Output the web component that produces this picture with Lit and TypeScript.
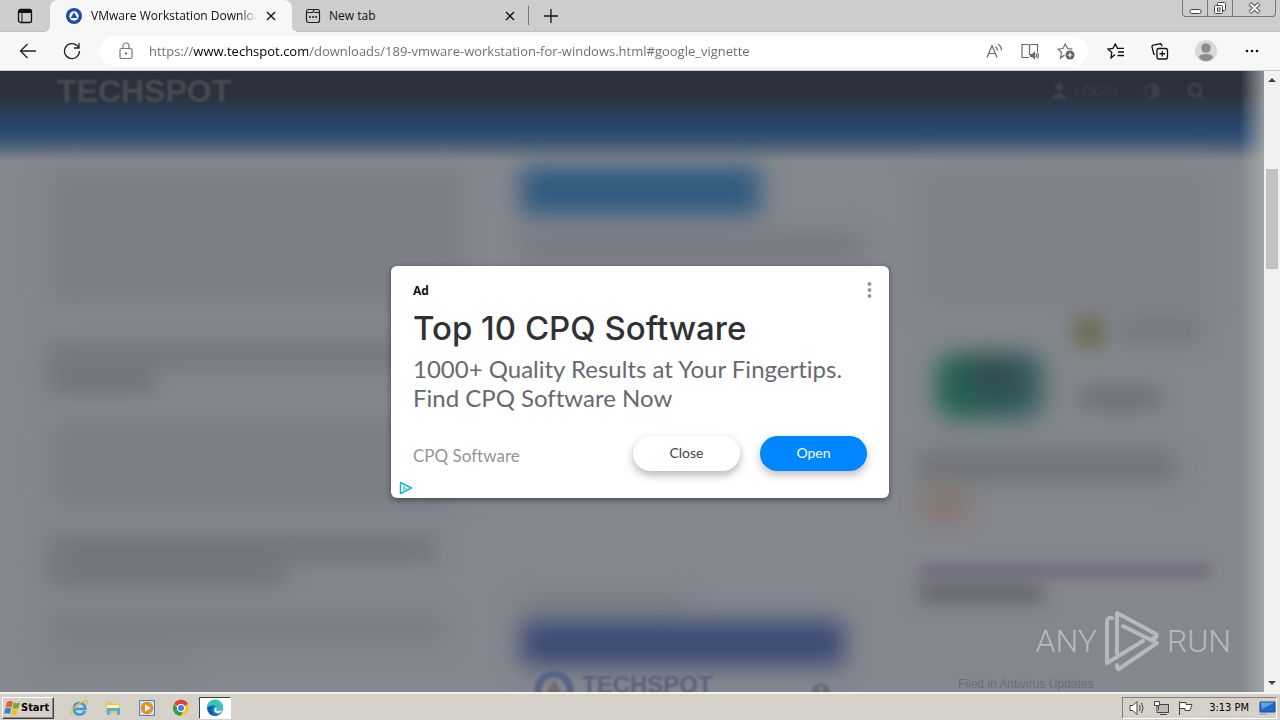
import { LitElement, html, css, svg } from "lit";
import { customElement } from "lit/decorators.js";
import { styleMap } from "lit/directives/style-map.js";

interface Block {
  gap: number;
  h: number;
  w: number;
  tone: string;
}

const leftColumn: Block[] = [
  { gap: 0, h: 140, w: 88, tone: "#7c7f85" },
  { gap: 38, h: 20, w: 84, tone: "#70737b" },
  { gap: 4, h: 20, w: 22, tone: "#696c74" },
  { gap: 30, h: 90, w: 86, tone: "#7c7f85" },
  { gap: 30, h: 20, w: 82, tone: "#6c6f77" },
  { gap: 4, h: 20, w: 50, tone: "#6c6f77" },
  { gap: 28, h: 34, w: 84, tone: "#7b7e85" },
  { gap: 4, h: 16, w: 30, tone: "#7b7e85" },
];

const middleColumn: Block[] = [
  { gap: 0, h: 48, w: 60, tone: "#2f5a80" },
  { gap: 20, h: 24, w: 86, tone: "#74777e" },
  { gap: 340, h: 10, w: 42, tone: "#74777c" },
  { gap: 12, h: 44, w: 81, tone: "#3b4a75" },
];

const logoMark = svg`<circle cx="12" cy="12" r="12" fill="#1b4f9f"/><circle cx="12" cy="12" r="7" fill="#fff"/><path d="M12 6.500 17 15H7Z" fill="#1b4f9f"/>`;

@customElement("faded-page")
class FadedPage extends LitElement {
  static styles = css`
    :host { display: block; background: #84878e; overflow: hidden; position: relative; }
    .band { height: 90px; background: linear-gradient(#2b2f3a 0, #2c313b 24px, #2a3b50 36px, #294163 48px, #2c4a70 60px, #3d5675 70px, #65717f 81px, #84878e 90px); }
    .columns { display: grid; grid-template-columns: 471fr 399fr 290fr; padding: 0 54px 0 50px; }
    .column { padding-top: 6px; }
    .block { filter: blur(12px); }
    .listing { height: 140px; background: #7e8188; filter: blur(14px); }
    .news { display: grid; grid-template-columns: 1fr 1fr; height: 118px; margin-top: 8px; column-gap: 14px; }
    .thumb { margin: 38px 14px 14px 16px; border-radius: 20px; background: radial-gradient(circle at 55% 30%, #2f4549, transparent 60%), linear-gradient(90deg, #1f6355, #3a6064); filter: blur(12px); }
    .source { display: flex; gap: 12px; height: 34px; }
    .dot { width: 34px; background: #6a6b51; border-radius: 50%; filter: blur(10px); }
    .name { flex: 1; margin: 0 10px 4px 0; background: #777a81; filter: blur(10px); }
    .caption { height: 22px; margin: 38px 50px 0 8px; background: #6c6f76; filter: blur(10px); }
    .story { height: 30px; margin-top: 18px; width: 88%; background: #6f7279; filter: blur(12px); }
    .badge { height: 36px; margin-top: 4px; width: 50px; background: linear-gradient(#827b6a, #8a6d66); filter: blur(12px); opacity: .8; }
    .rule { height: 16px; margin-top: 42px; background: #766f80; filter: blur(6px); }
    .topic { height: 20px; width: 42%; margin-top: 4px; background: #64666f; filter: blur(9px); }
    .edge { position: absolute; inset: 0 0 0 auto; width: 24px; background: linear-gradient(90deg, transparent, #a9adae); opacity: .8; }
    .sharp { position: absolute; inset: 0; display: flex; flex-direction: column; justify-content: space-between; }
    .top { display: flex; justify-content: space-between; padding: 3px 58px 0 57px; align-items: center; height: 34px; }
    .brand { font: 700 32px/32px "Liberation Sans", sans-serif; color: #474b54; filter: blur(1px); }
    .user { display: flex; align-items: center; gap: 24px; color: #3d414b; font: 14px/20px "Liberation Sans", sans-serif; filter: blur(1px); }
    .login { display: flex; align-items: center; gap: 6px; }
    .foot { display: grid; grid-template-columns: 471fr 399fr 290fr; padding: 0 54px 0 50px; height: 22px; }
    .stamp { grid-column: 2; display: flex; align-items: flex-start; gap: 8px; padding-left: 13px; font: 700 24px/30px "Liberation Sans", sans-serif; color: #59637a; filter: blur(1px); }
    .info { margin-left: 90px; margin-top: 12px; }
    .filed { padding: 4px 0 0 38px; font: 12px/20px "Liberation Sans", sans-serif; color: #6b6e76; white-space: nowrap; }
  `;

  private blocks(items: Block[]) {
    return items.map(
      (b) => html`<div class="block" style=${styleMap({ marginTop: `${b.gap}px`, height: `${b.h}px`, width: `${b.w}%`, background: b.tone })}></div>`
    );
  }

  render() {
    return html`
      <div class="band"></div>
      <div class="columns">
        <div class="column">${this.blocks(leftColumn)}</div>
        <div class="column">${this.blocks(middleColumn)}</div>
        <div class="column">
          <div class="listing"></div>
          <div class="news">
            <div class="thumb"></div>
            <div>
              <div class="source"><div class="dot"></div><div class="name"></div></div>
              <div class="caption"></div>
            </div>
          </div>
          <div class="story"></div>
          <div class="badge"></div>
          <div class="rule"></div>
          <div class="topic"></div>
        </div>
      </div>
      <div class="edge"></div>
      <div class="sharp">
        <div class="top">
          <div class="brand">TECHSPOT</div>
          <div class="user">
            <span class="login">
              <svg width="18" height="18" viewBox="0 0 18 18" fill="currentColor"><circle cx="9" cy="5" r="4"/><path d="M2 17c0-9 14-9 14 0Z"/></svg>
              LOGIN
            </span>
            <svg width="20" height="20" viewBox="0 0 20 20"><circle cx="10" cy="10" r="7" fill="none" stroke="currentColor" stroke-width="2"/><path d="M10 3a7 7 0 0 1 0 14Z" fill="currentColor"/></svg>
            <svg width="20" height="20" viewBox="0 0 20 20" fill="none" stroke="currentColor" stroke-width="3"><circle cx="9" cy="9" r="6"/><path d="m13 13 5 5"/></svg>
          </div>
        </div>
        <div class="foot">
          <div class="stamp">
            <svg width="40" height="40" viewBox="0 0 40 40"><circle cx="20" cy="20" r="16" fill="none" stroke="#586683" stroke-width="7"/><path d="m20 10 8 14H12Z" fill="#73696a"/></svg>
            TECHSPOT
            <svg class="info" width="20" height="20" viewBox="0 0 20 20"><circle cx="10" cy="10" r="9" fill="#676b75"/><path d="M10 4v10" stroke="#84878e" stroke-width="3"/></svg>
          </div>
          <div class="filed">Filed in Antivirus Updates</div>
        </div>
      </div>
    `;
  }
}

@customElement("ad-card")
class AdCard extends LitElement {
  static styles = css`
    :host { display: block; box-sizing: border-box; width: 498px; max-width: 90vw; background: #fff; border-radius: 6px; padding: 16px 22px 27px; box-shadow: 0 2px 6px rgba(0, 0, 0, .45); position: relative; font-family: "Lato", sans-serif; font-variant-ligatures: none; color: #303134; }
    .head { display: flex; justify-content: space-between; height: 24px; }
    .tag { font: 700 12px/18px "Open Sans", sans-serif; color: #111; }
    h1 { margin: 3px 0 0; font: 500 33px/38px "Inter", sans-serif; white-space: nowrap; }
    p { margin: 7px 0 0; font-weight: 400; font-size: 24px; line-height: 29px; color: #68696d; }
    .row { display: flex; align-items: center; gap: 20px; margin-top: 24px; }
    .by { flex: 1; font-size: 17px; line-height: 24px; color: #939599; padding-top: 6px; }
    button { font-family: inherit; font-size: 14px; line-height: 20px; cursor: pointer; border: 0; }
    .pill { width: 107px; height: 35px; border-radius: 18px; padding: 0; color: #444; background: #fff; box-shadow: 0 4px 8px rgba(40, 40, 60, .35); }
    .open { background: #0087ff; color: #fff; box-shadow: 0 4px 8px rgba(80, 60, 60, .35); }
    .more { display: flex; justify-content: center; background: none; padding: 0; width: 16px; height: 16px; margin: 0 -10px 0 0; }
    .choices { position: absolute; left: 8px; bottom: 3px; width: 14px; height: 14px; }
    svg { display: block; }
  `;

  render() {
    return html`
      <div class="head">
        <span class="tag">Ad</span>
        <button class="more" aria-label="More options">
          <svg width="5" height="16" viewBox="0 0 5 16" fill="#999"><circle cx="2.500" cy="2" r="2"/><circle cx="2.500" cy="8" r="2"/><circle cx="2.500" cy="14" r="2"/></svg>
        </button>
      </div>
      <h1>Top 10 CPQ Software</h1>
      <p>1000+ Quality Results at Your Fingertips. Find CPQ Software Now</p>
      <div class="row">
        <span class="by">CPQ Software</span>
        <button class="pill">Close</button>
        <button class="pill open">Open</button>
      </div>
      <a class="choices" href="#" aria-label="AdChoices">
        <svg width="14" height="14" viewBox="0 0 14 14" fill="none" stroke="#16b6c4"><path d="M1.500 1.500v11L12.500 7Z" stroke-width="1.500" stroke-linejoin="round"/><path d="M5 5v4.500M7 6.500V8" stroke-width="1.200"/></svg>
      </a>
    `;
  }
}

@customElement("app-root")
class AppRoot extends LitElement {
  static styles = css`
    :host { display: flex; flex-direction: column; height: 100vh; font: 12px/16px "Open Sans", "Noto Sans", sans-serif; color: #111; overflow: hidden; }
    button { border: 0; padding: 0; background: none; font: inherit; color: inherit; display: flex; align-items: center; justify-content: center; }
    svg { display: block; flex: none; }

    .tabs { display: flex; align-items: stretch; height: 31px; background: #cdcdcd; border-bottom: 1px solid #c0c0c0; }
    .spaces { width: 50px; }
    .tab { display: flex; align-items: center; gap: 8px; width: 236px; padding: 0 13px 0 13px; box-sizing: border-box; }
    .tab.active { width: 242px; background: #f7f7f7; border-radius: 8px 8px 0 0; margin-bottom: -1px; padding: 0 16px; position: relative; gap: 9px; }
    .tab.active::before, .tab.active::after { content: ""; position: absolute; bottom: 0; width: 6px; height: 6px; }
    .tab.active::before { right: 100%; background: radial-gradient(circle at 0 0, transparent 6px, #f7f7f7 6px); }
    .tab.active::after { left: 100%; background: radial-gradient(circle at 100% 0, transparent 6px, #f7f7f7 6px); }
    .title { flex: 1; text-align: left; white-space: nowrap; overflow: hidden; }
    .active .title { mask-image: linear-gradient(90deg, #000 90%, transparent); }
    .new { width: 44px; border-left: 1px solid #777; margin: 6px 0; }
    .controls { margin-left: auto; margin-right: 4px; display: flex; height: 17px; border: 1px solid #777; border-top: 0; border-radius: 0 0 4px 4px; box-sizing: border-box; }
    .controls button { width: 25px; border-right: 1px solid #777; }
    .controls .quit { width: 42px; border-right: 0; }

    .tools { display: flex; align-items: center; height: 39px; padding: 0 6px; background: #f7f7f7; border-bottom: 1px solid #c9c9c9; box-sizing: border-box; }
    .tool { width: 44px; height: 32px; }
    .tool.me { width: 48px; }
    .address { flex: 1; display: flex; align-items: center; height: 30px; margin: 0 6px; padding: 0 4px 0 18px; border-radius: 15px; background: #fff; color: #6b6b6b; }
    .address input { flex: 1; min-width: 0; margin-left: 15px; border: 0; padding: 0; outline: 0; font: 13px/20px "Open Sans", "Noto Sans", sans-serif; color: transparent; caret-color: #000; background: linear-gradient(90deg, #6b6b6b 45px, #000 45px 159px, #6b6b6b 159px); -webkit-background-clip: text; background-clip: text; }
    .small { width: 36px; }

    .stage { flex: 1; min-height: 0; display: grid; grid-template-columns: 1fr 16px; grid-template-rows: 100%; position: relative; }
    faded-page { grid-area: 1 / 1; }
    .scroll { grid-area: 1 / 2; display: flex; flex-direction: column; background: #f1f1f1; }
    .scroll button { height: 18px; }
    .track { flex: 1; display: flex; flex-direction: column; padding: 0 2px; }
    .before { flex: 80; }
    .thumb { flex: 100; background: #c1c1c1; }
    .after { flex: 405; }
    ad-card { grid-area: 1 / 1 / 2 / 3; place-self: center; z-index: 1; }
    .mark { position: absolute; right: 49px; bottom: 20px; display: flex; align-items: center; gap: 7px; color: #b6babf; font: 300 32px/62px "Roboto", sans-serif; }

    .taskbar { display: flex; align-items: center; height: 28px; box-sizing: border-box; padding: 2px 3px 0 2px; border-top: 2px solid #f4f3ee; background: #d5d0c8; font: 11px/14px "DejaVu Sans Condensed", "DejaVu Sans", sans-serif; color: #000; }
    .start { height: 22px; width: 52px; font-weight: 700; border: 1px solid; border-color: #fff #404040 #404040 #fff; box-shadow: inset -1px -1px #888; box-sizing: border-box; justify-content: flex-start; padding-left: 1px; }
    .launch { display: flex; padding-left: 8px; }
    .launch button { width: 34px; height: 22px; }
    .launch .on { width: 32px; margin-left: 1px; background: #fff; border: 1px solid; border-color: #404040 #fff #fff #404040; box-sizing: border-box; }
    .tray { margin-left: auto; height: 22px; display: flex; align-items: center; gap: 7px; padding: 0 0 0 6px; border: 1px solid; border-color: #808080 #fff #fff #808080; box-sizing: border-box; }
    .clock { margin: 0 2px 0 8px; white-space: nowrap; }
  `;

  render() {
    const cross = html`<svg width="10" height="10" viewBox="0 0 10 10" stroke="#111" stroke-width="1.400"><path d="m1 1 8 8M9 1 1 9"/></svg>`;
    return html`
      <div class="tabs">
        <button class="spaces" aria-label="Tab actions">
          <svg width="16" height="16" viewBox="0 0 16 16"><rect x="1.500" y="1.500" width="13" height="13" rx="2" fill="none" stroke="#111" stroke-width="1.300"/><path d="M1.500 5V3q0-1.500 1.500-1.500h10q1.500 0 1.500 1.500v2Z" fill="#111"/><path d="M5 5v9" stroke="#111"/></svg>
        </button>
        <button class="tab active">
          <svg width="16" height="16" viewBox="0 0 24 24">${logoMark}</svg>
          <span class="title">VMware Workstation Download</span>
          ${cross}
        </button>
        <button class="tab">
          <svg width="16" height="16" viewBox="0 0 16 16" fill="none" stroke="#222" stroke-width="1.200"><rect x="1.500" y="1.500" width="13" height="13" rx="2"/><path d="M1.500 4.500h6l2-3M9 4.500h5.500"/><path d="M4 9h2M7 9h2M10 9h2" stroke-width="1.500"/></svg>
          <span class="title">New tab</span>
          ${cross}
        </button>
        <button class="new" aria-label="New tab">
          <svg width="14" height="14" viewBox="0 0 14 14" stroke="#111" stroke-width="1.300"><path d="M7 0v14M0 7h14"/></svg>
        </button>
        <div class="controls">
          <button aria-label="Minimize"><svg width="13" height="13" viewBox="0 0 13 13"><rect x="1" y="7.500" width="11" height="4" rx="1.500" fill="#fff" stroke="#444"/></svg></button>
          <button aria-label="Restore"><svg width="14" height="14" viewBox="0 0 14 14" fill="#fff" stroke="#444"><rect x="4.500" y="1.500" width="8" height="8" rx="1"/><rect x="1.500" y="4.500" width="8" height="8" rx="1"/><rect x="4.500" y="7" width="2.500" height="3"/></svg></button>
          <button class="quit" aria-label="Close window"><svg width="13" height="12" viewBox="0 0 13 12"><path d="m2 1.500 9 9m0-9-9 9" stroke="#555" stroke-width="4"/><path d="m2.500 2 8 8m0-8-8 8" stroke="#fff" stroke-width="2"/></svg></button>
        </div>
      </div>

      <div class="tools">
        <button class="tool" aria-label="Back"><svg width="18" height="16" viewBox="0 0 18 16" fill="none" stroke="#222" stroke-width="1.300"><path d="M17 8H1.500M8.500 1l-7 7 7 7"/></svg></button>
        <button class="tool" aria-label="Refresh"><svg width="18" height="18" viewBox="0 0 18 18" fill="none" stroke="#222" stroke-width="1.300"><path d="M16.500 9A7.500 7.500 0 1 1 14 3.500l2 2M16 1v5h-5"/></svg></button>
        <div class="address">
          <svg width="16" height="18" viewBox="0 0 16 18" fill="none" stroke="#777" stroke-width="1.200"><rect x="2" y="6.500" width="12" height="10" rx="1.500"/><path d="M5 6.500V4a3 3 0 0 1 6 0v2.500"/><circle cx="8" cy="11.500" r=".7" fill="#777"/></svg>
          <input aria-label="Address" spellcheck="false" value="https://www.techspot.com/downloads/189-vmware-workstation-for-windows.html#google_vignette" />
          <button class="small" aria-label="Read aloud"><svg width="17" height="16" viewBox="0 0 17 16" fill="none" stroke="#6b6b6b" stroke-width="1.200"><path d="m1 14.500 5-12 5 12M2.700 10.500h6.600M9.500 3.500q2 1.500 2 4M12 1q3.500 2.500 3.500 6.500"/></svg></button>
          <button class="small" aria-label="Immersive reader"><svg width="18" height="17" viewBox="0 0 18 17" fill="none" stroke="#6b6b6b" stroke-width="1.200"><path d="M8 14.500H1v-13h5.500Q8.500 1.500 8.500 3v9M8.500 3q0-1.500 2-1.500H16.500V9"/><path d="M9.500 11.500h2l2-2v6l-2-2h-2Z" fill="#6b6b6b"/><path d="M15 10.500q1 2 0 4M16.500 9.500q1.500 3 0 6"/></svg></button>
          <button class="small" aria-label="Add to favorites"><svg width="18" height="17" viewBox="0 0 18 17" fill="none" stroke="#6b6b6b" stroke-width="1.200"><path d="M7.500 12 3.500 15l1-5.500L1 6.200l5-.7 2.300-4.500 2.300 4.500 4.800.7"/><circle cx="13" cy="12" r="4.500" fill="#5f5f5f" stroke="none"/><path d="M13 9.500v5M10.500 12h5" stroke="#fff"/></svg></button>
        </div>
        <button class="tool" aria-label="Favorites"><svg width="18" height="16" viewBox="0 0 18 16" fill="none" stroke="#111" stroke-width="1.300"><path d="M8 11.500 4 15l.8-5.500L1 6l5-.7L8.300 1l2.200 4.300H17M11 9h6M10.500 12.500H17"/></svg></button>
        <button class="tool" aria-label="Collections"><svg width="18" height="17" viewBox="0 0 18 17" fill="none" stroke="#111" stroke-width="1.300"><rect x="6" y="5.500" width="10.500" height="10.500" rx="2"/><path d="M11.250 8v5.500M8.500 10.750H14M4 11.500 2.800 11 1 4q-.2-1.500 1-1.800L8.500.800q1.500-.2 2 1l.500 1.500"/></svg></button>
        <button class="tool me" aria-label="Profile"><svg width="22" height="22" viewBox="0 0 22 22"><circle cx="11" cy="11" r="11" fill="#dad8d6"/><circle cx="11" cy="8" r="4.800" fill="#8f8b88"/><path d="M4 17.500q0-3.500 7-3.500t7 3.500q-2.500 3.500-7 3.500t-7-3.500" fill="#8f8b88"/></svg></button>
        <button class="tool" aria-label="Settings"><svg width="14" height="4" viewBox="0 0 14 4" fill="#111"><circle cx="2" cy="2" r="1.300"/><circle cx="7" cy="2" r="1.300"/><circle cx="12" cy="2" r="1.300"/></svg></button>
      </div>

      <div class="stage">
        <faded-page></faded-page>
        <div class="scroll">
          <button aria-label="Scroll up"><svg width="8" height="4" viewBox="0 0 8 4"><path d="M0 4 4 0l4 4Z" fill="#444"/></svg></button>
          <div class="track"><div class="before"></div><div class="thumb"></div><div class="after"></div></div>
          <button aria-label="Scroll down"><svg width="8" height="4" viewBox="0 0 8 4"><path d="m0 0 4 4 4-4Z" fill="#444"/></svg></button>
        </div>
        <ad-card></ad-card>
        <div class="mark">
          <span>ANY</span>
          <svg width="56" height="62" viewBox="0 0 56 62" fill="none" stroke="#b6babf" stroke-width="4" stroke-linejoin="round" stroke-linecap="round"><path d="M13 43V3L52 24q2 2-1 4H49M19 16 53 33 15 59q-2 0-2-4"/><path d="M8 8Q3 7 3 12V53L39 31"/></svg>
          <span>RUN</span>
        </div>
      </div>

      <div class="taskbar">
        <button class="start">
          <svg width="17" height="16" viewBox="0 0 17 16"><path d="M3 2q3-2 6 0L7.500 7.500Q4.500 6 1.500 7.500Z" fill="#e2602e"/><path d="M10 2.500q3 1.500 6 0L14.500 8q-3 1.500-6 0Z" fill="#6aae35"/><path d="M1.200 8.500q3-1.500 6 0L5.700 14q-3-1.500-5.500 0Z" fill="#3c7fc9"/><path d="M8.200 9q3 1.500 6 0l-1.500 5.500q-3 1.500-6 0Z" fill="#f3bd27"/></svg>
          Start
        </button>
        <div class="launch">
          <button aria-label="Internet Explorer"><svg width="18" height="18" viewBox="0 0 18 18" fill="none"><path d="M15 12q-1.500 3.500-5.500 3.500-5.500 0-5.500-6 0-5.500 5.500-5.500t5.800 6H5" stroke="#3a9bdc" stroke-width="2.600"/><path d="M2 16q-3-2 3-8t12-6q1 1-1 4" stroke="#e9bd35" stroke-width="1.400"/></svg></button>
          <button aria-label="Explorer"><svg width="18" height="18" viewBox="0 0 18 18"><path d="M2 3h6l1.500 2H16v9H2Z" fill="#e8c65a"/><path d="M3 6h12v3H3Z" fill="#fff2b5"/><path d="M3 9h13v7h-3v-4H6v4H3Z" fill="#58addb"/></svg></button>
          <button aria-label="Media Player"><svg width="18" height="18" viewBox="0 0 18 18"><rect x="1.500" y="1.500" width="15" height="15" fill="#c8e2f2" stroke="#4f8bc0"/><circle cx="9" cy="9" r="6.200" fill="#f08a1d"/><path d="m7 5.500 6 3.500-6 3.500Z" fill="#fff"/></svg></button>
          <button aria-label="Chrome"><svg width="18" height="18" viewBox="0 0 18 18"><circle cx="9" cy="9" r="8" fill="#f6c62c"/><path d="M9 9 2 5a8 8 0 0 1 14 0Z" fill="#dc4437"/><path d="M2 5a8 8 0 0 0 6.500 12L11 12 7 11Z" fill="#2c9d55"/><circle cx="9" cy="9" r="4" fill="#fff"/><circle cx="9" cy="9" r="3" fill="#3d7eea"/></svg></button>
          <button class="on" aria-label="Edge"><svg width="18" height="18" viewBox="0 0 18 18"><circle cx="9" cy="9" r="8" fill="#1877c4"/><path d="M1 9a8 8 0 0 1 16-1q0 4-4.500 4-3 0-2-2Q11 6.500 7.500 6.500 3 6.500 1 9" fill="#38c6b4"/><path d="M1.200 9q2-3 6-2.500Q4 9 6 13t6 3.500Q3 18.500 1.200 9" fill="#0f5bac"/><path d="M10.500 10q-1 2 2 2 2 0 4-1.500-1 3-3.500 4-4 0-5-3-.2-2 1.500-3.500Q10.800 8.500 10.500 10" fill="#fff" opacity=".9"/></svg></button>
        </div>
        <div class="tray">
          <svg width="17" height="16" viewBox="0 0 17 16" fill="#fff" stroke="#444"><path d="M1 5.500h3l4-4v13l-4-4H1Z"/><path d="M10.500 5q1.500 3 0 6M12.500 3q3 5 0 10" fill="none"/></svg>
          <svg width="17" height="16" viewBox="0 0 17 16" fill="#fff" stroke="#444"><rect x="5.500" y="4.500" width="10" height="8" fill="#bbb"/><path d="M7 14.500h7M1.500 1.500h5v4h-5ZM4 5.500v7h2"/></svg>
          <svg width="17" height="16" viewBox="0 0 17 16" fill="#fff" stroke="#444"><path d="M2.500 15V1.500M3 2.500h6v2h6l-2 6H8v-2H3"/></svg>
          <span class="clock">3:13 PM</span>
          <svg width="18" height="14" viewBox="0 0 18 14"><path d="M2 1h15v10H2Z" fill="#2369c9" stroke="#174a93"/><path d="M2.500 1.500h14L4 8Z" fill="#5fa2ea"/><path d="M1 13h8" stroke="#9db9d8" stroke-width="2"/></svg>
        </div>
      </div>
    `;
  }
}
